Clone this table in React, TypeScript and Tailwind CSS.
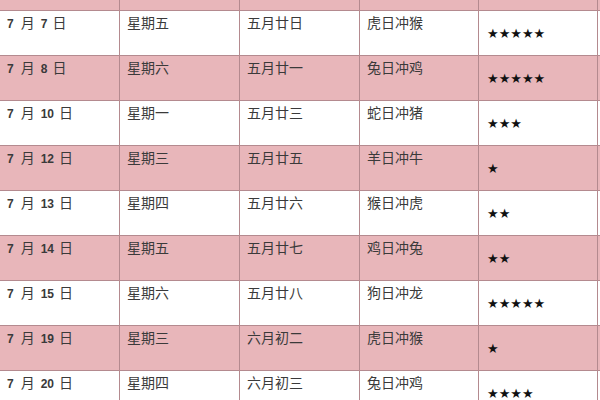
const rows = [
  { m: "7", d: "7", week: "星期五", lunar: "五月廿日", clash: "虎日冲猴", stars: 5 },
  { m: "7", d: "8", week: "星期六", lunar: "五月廿一", clash: "兔日冲鸡", stars: 5 },
  { m: "7", d: "10", week: "星期一", lunar: "五月廿三", clash: "蛇日冲猪", stars: 3 },
  { m: "7", d: "12", week: "星期三", lunar: "五月廿五", clash: "羊日冲牛", stars: 1 },
  { m: "7", d: "13", week: "星期四", lunar: "五月廿六", clash: "猴日冲虎", stars: 2 },
  { m: "7", d: "14", week: "星期五", lunar: "五月廿七", clash: "鸡日冲兔", stars: 2 },
  { m: "7", d: "15", week: "星期六", lunar: "五月廿八", clash: "狗日冲龙", stars: 5 },
  { m: "7", d: "19", week: "星期三", lunar: "六月初二", clash: "虎日冲猴", stars: 1 },
  { m: "7", d: "20", week: "星期四", lunar: "六月初三", clash: "兔日冲鸡", stars: 4 },
];

const cjk = "font-['Noto_Sans_CJK_SC','Liberation_Sans',sans-serif]";

export default function App() {
  return (
    <div className={`w-[600px] h-[400px] overflow-hidden bg-white text-[#3a3a3a] ${cjk}`}>
      {/* partial header row at the top */}
      <div className="flex h-[11px] bg-[#e8b6ba] border-b border-[#b48a8f]">
        <div className="w-[120px] border-r border-[#b48a8f]" />
        <div className="w-[120px] border-r border-[#b48a8f]" />
        <div className="w-[120px] border-r border-[#b48a8f]" />
        <div className="w-[119px] border-r border-[#b48a8f]" />
        <div className="w-[119px] border-r border-[#b48a8f]" />
      </div>
      {rows.map((r, i) => (
        <div
          key={i}
          className={`flex h-[45px] border-b border-[#b48a8f] ${i % 2 === 1 ? "bg-[#e8b6ba]" : "bg-white"}`}
        >
          <div className="w-[120px] border-r border-[#b48a8f] pl-[7px] pt-[1px] text-[14px] leading-5">
            <span className="font-['Liberation_Sans'] font-bold text-[12px]">{r.m}</span>
            <span className="ml-[7px]">月</span>
            <span className="ml-[6px] font-['Liberation_Sans'] font-bold text-[12px]">{r.d}</span>
            <span className="ml-[5px]">日</span>
          </div>
          <div className="w-[120px] border-r border-[#b48a8f] pl-[7px] pt-[1px] text-[14px] leading-5">{r.week}</div>
          <div className="w-[120px] border-r border-[#b48a8f] pl-[7px] pt-[1px] text-[14px] leading-5">{r.lunar}</div>
          <div className="w-[119px] border-r border-[#b48a8f] pl-[7px] pt-[1px] text-[14px] leading-5">{r.clash}</div>
          <div className="w-[119px] border-r border-[#b48a8f] pl-[8px] pt-[13px] text-[13px] leading-5 text-[#111] font-['DejaVu_Sans',sans-serif]">
            {"★".repeat(r.stars)}
          </div>
        </div>
      ))}
    </div>
  );
}
